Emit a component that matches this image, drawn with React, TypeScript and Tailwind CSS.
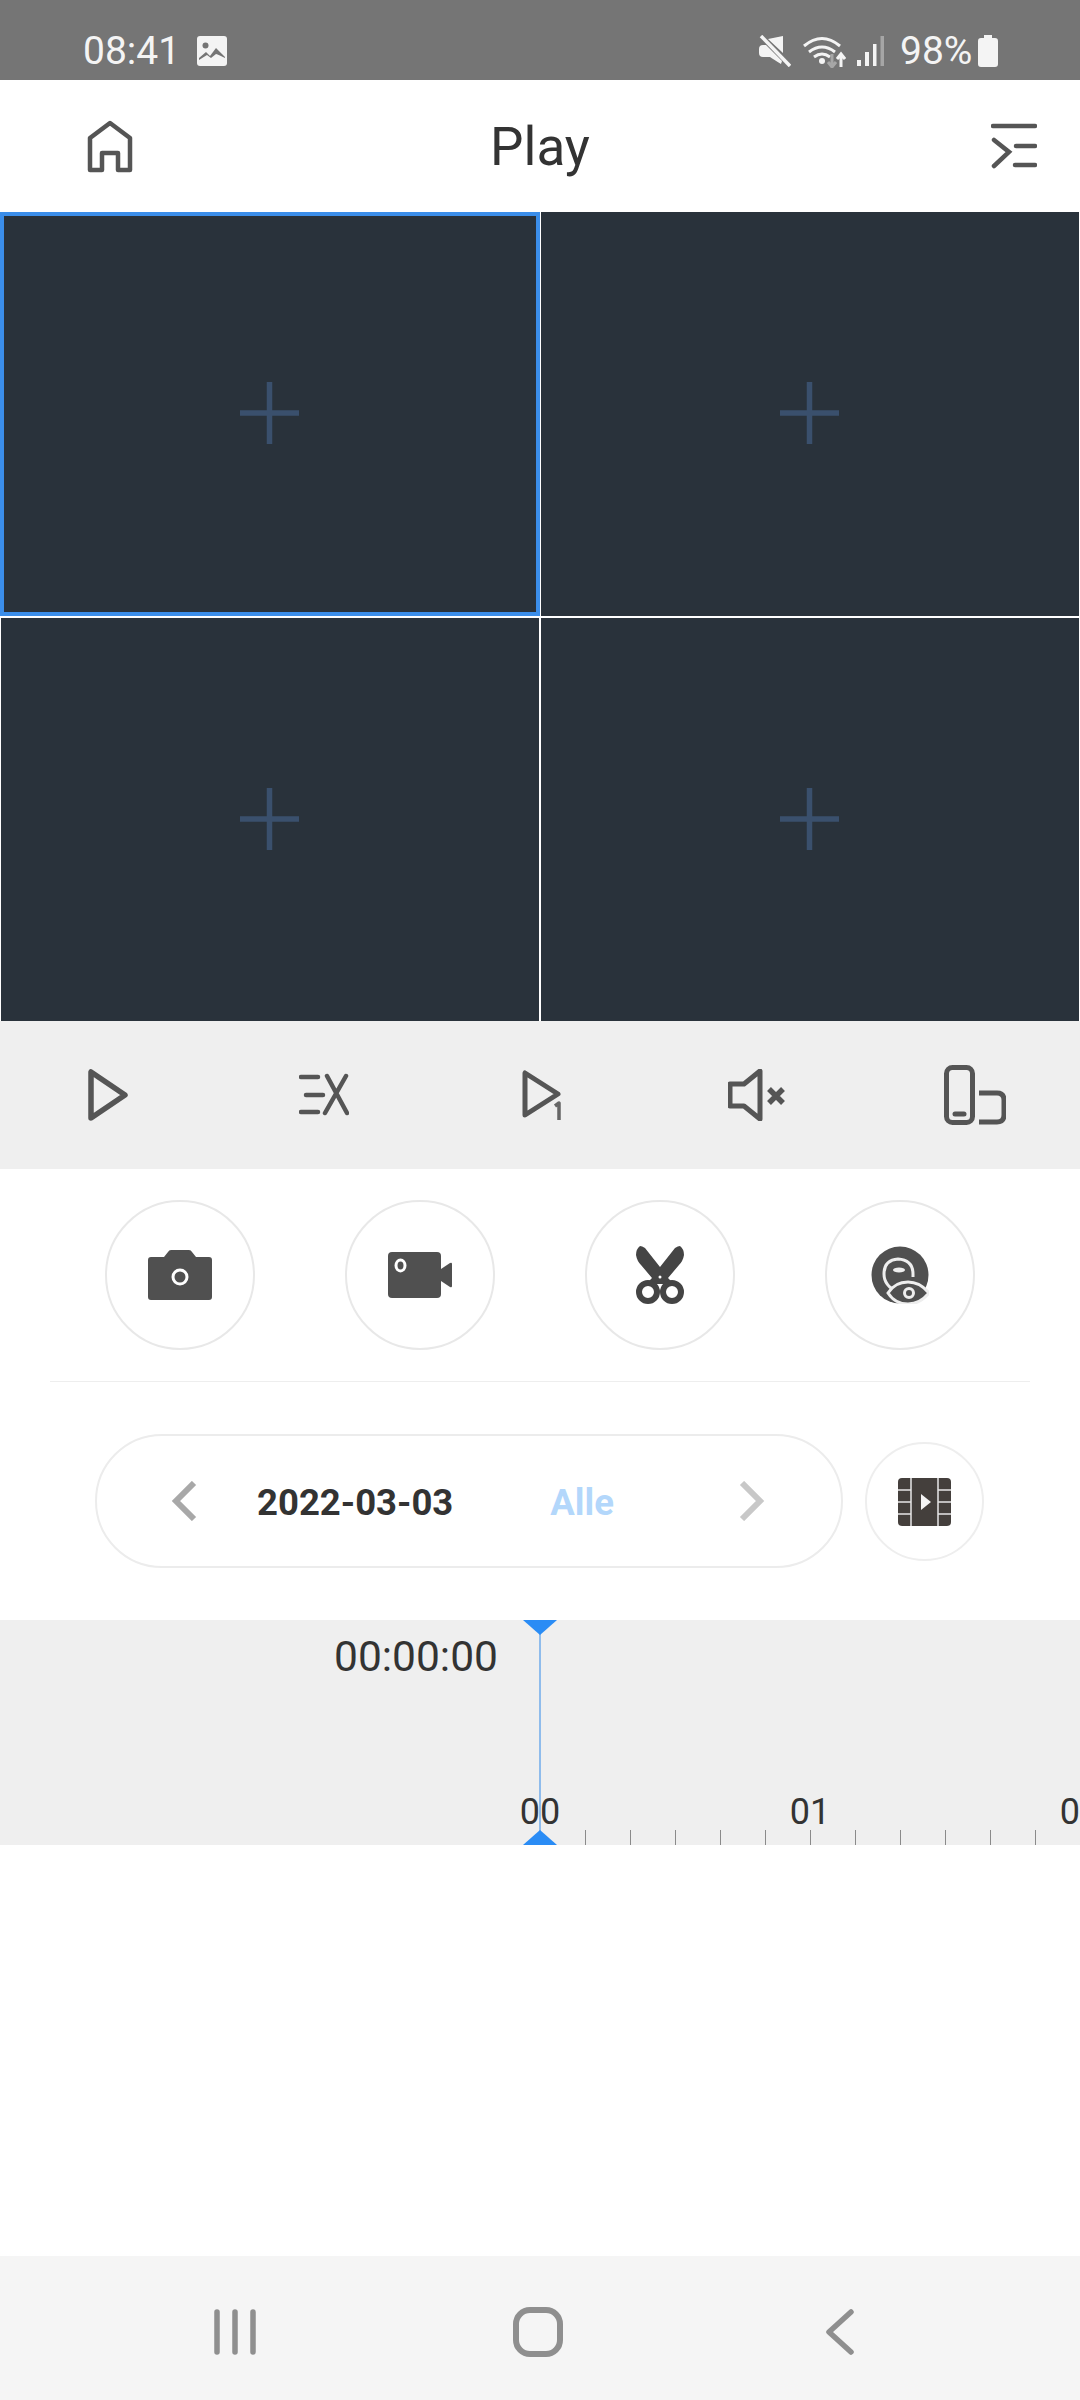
import React from 'react'

const cells = [0, 1, 2, 3]
const hours = ['00', '01', '02']
const ticks = [0, 1, 2, 3, 4, 5]

const Plus = () => (
  <svg width="60" height="62" viewBox="0 0 60 62" fill="none" stroke="#3a506d" strokeWidth="5.500">
    <path d="M0 31H59M29.500 0V62" />
  </svg>
)

const StatusBar = () => (
  <div className="h-20 bg-[#757575] pt-[22px] flex items-center text-[#f4f4f4] text-[39px] leading-none font-['Roboto',sans-serif]">
    <span className="ml-[83px] w-[114px]">08:41</span>
    <svg width="30" height="30" viewBox="0 0 30 30">
      <rect width="30" height="30" rx="3" fill="#f4f4f4" />
      <circle cx="8.500" cy="9.500" r="3" fill="#757575" />
      <path d="M2 22l7-6 4 4 6-8 9 9v1q-8-4-9-4l-5 4-4-3-8 5z" fill="#757575" />
    </svg>
    <div className="ml-auto mr-[82px] flex items-center">
      <svg width="32" height="32" viewBox="0 0 32 32" fill="#f4f4f4">
        <path d="M24 1v17L9 4zM0 14q0-4 4-4h3l16 16-1 3q-8-5-11-7H4q-4 0-4-4z" />
        <path d="M2 1l29 30" stroke="#f4f4f4" strokeWidth="3.500" />
      </svg>
      <svg className="ml-3" width="43" height="33" viewBox="0 0 43 33" fill="none" stroke="#f4f4f4" strokeWidth="3">
        <path d="M1 11q18-15 36 0M6 17q13-10 26 0M11 22q8-6 16 0" />
        <circle cx="19" cy="26" r="3" fill="#f4f4f4" stroke="none" />
        <path d="M29 19v13M25 27l4 5 4-5" stroke="#a6a6a6" />
        <path d="M38 32V19M34 24l4-5 4 5" />
      </svg>
      <svg className="ml-[11px]" width="27" height="30" viewBox="0 0 27 30" fill="#f4f4f4">
        <rect x="0" y="24" width="4" height="6" />
        <rect x="8" y="16" width="4" height="14" />
        <rect x="16" y="8" width="3.500" height="22" />
        <rect x="23.500" y="0" width="3.500" height="30" fill="#a6a6a6" />
      </svg>
      <span className="ml-4 w-[71px]">98%</span>
      <svg className="ml-[7px]" width="20" height="32" viewBox="0 0 20 32" fill="#f4f4f4">
        <path d="M6 0h8v3h3q3 0 3 3v23q0 3-3 3H3q-3 0-3-3V6q0-3 3-3h3z" />
      </svg>
    </div>
  </div>
)

const Header = () => (
  <div className="h-[132px] bg-white grid grid-cols-[1fr_auto_1fr] items-center">
    <svg className="ml-[87px]" width="46" height="53" viewBox="0 0 46 53" fill="none" stroke="#555" strokeWidth="4.500" strokeLinejoin="round">
      <path d="M3 50V18L23 3l20 15v32H31V33H15v17z" />
    </svg>
    <div className="text-[53px] leading-none pt-[3px] text-[#333] font-['Roboto',sans-serif]">Play</div>
    <svg className="justify-self-end mr-[43px]" width="46" height="46" viewBox="0 0 46 46" fill="none" stroke="#555" strokeWidth="4.500" strokeLinecap="round">
      <path d="M2 3h42M3 17l15 12L3 43M25 23h19M24 42h20" />
    </svg>
  </div>
)

const ControlBar = () => (
  <div className="h-[148px] bg-[#efefef] grid grid-cols-5 items-center justify-items-center">
    <svg width="40" height="52" viewBox="0 0 40 52" fill="none" stroke="#555" strokeWidth="5.500" strokeLinejoin="round">
      <path d="M3 3v46l34-23z" />
    </svg>
    <svg width="50" height="44" viewBox="0 0 50 44" fill="none" stroke="#555" strokeWidth="4.500" strokeLinecap="round">
      <path d="M2 4h17M7 22h17M2 39h17M26 40L47 3M28 3l20 37" />
    </svg>
    <svg className="ml-[4px]" width="40" height="50" viewBox="0 0 40 50" fill="none" stroke="#555" strokeWidth="5" strokeLinejoin="round">
      <path d="M3 3v42l33-21z" />
      <path d="M33 36l4-3v17" strokeWidth="3.500" stroke="#666" />
    </svg>
    <svg width="57" height="52" viewBox="0 0 57 52" fill="none" stroke="#555" strokeWidth="5" strokeLinejoin="round">
      <path d="M2 15h14L32 2v48L16 37H2z" />
      <path d="M41 20l14 14M55 20L41 34" strokeWidth="5.500" />
    </svg>
    <svg className="ml-[5px]" width="62" height="60" viewBox="0 0 62 60" fill="none" stroke="#555" strokeWidth="5">
      <rect x="2.500" y="2.500" width="26" height="55" rx="6" />
      <path d="M11 49h9" strokeWidth="5" strokeLinecap="round" />
      <path d="M35 28h18q7 0 7 7v15q0 7-7 7H35" />
    </svg>
  </div>
)

const Actions = () => (
  <div className="h-[213px] mx-[50px] border-b border-[#eeeeee] flex items-center gap-[90px] px-[55px] pb-[1px]">
    <div className="w-[150px] h-[150px] shrink-0 rounded-full border-2 border-[#e8e8e8] flex items-center justify-center">
      <svg width="64" height="50" viewBox="0 0 64 50" fill="#505050">
        <path d="M3 7h13l4-5q1-2 3-2h18q2 0 3 2l4 5h13q3 0 3 3v37q0 3-3 3H3q-3 0-3-3V10q0-3 3-3z" />
        <circle cx="32" cy="27" r="7" fill="none" stroke="#fff" strokeWidth="3" />
      </svg>
    </div>
    <div className="w-[150px] h-[150px] shrink-0 rounded-full border-2 border-[#e8e8e8] flex items-center justify-center">
      <svg width="64" height="46" viewBox="0 0 64 46" fill="#505050">
        <rect width="53" height="46" rx="4" />
        <path d="M53 17l9-6q2-1 2 1v22q0 2-2 1l-9-6z" />
        <ellipse cx="12.500" cy="13.500" rx="4.500" ry="5.500" fill="none" stroke="#fff" strokeWidth="3" />
      </svg>
    </div>
    <div className="w-[150px] h-[150px] shrink-0 rounded-full border-2 border-[#e8e8e8] flex items-center justify-center">
      <svg width="48" height="58" viewBox="0 0 48 58" fill="#444">
        <path d="M4 0Q0 3 0 9q1 6 5 10l11 13-6 6h28l-6-6 11-13q4-4 5-10 0-6-4-9-2 0-5 2L24 21 9 2Q6 0 4 0z" />
        <circle cx="12" cy="46" r="9" fill="none" stroke="#444" strokeWidth="6" />
        <circle cx="36" cy="46" r="9" fill="none" stroke="#444" strokeWidth="6" />
        <circle cx="24" cy="31" r="1.500" fill="#fff" />
      </svg>
    </div>
    <div className="w-[150px] h-[150px] shrink-0 rounded-full border-2 border-[#e8e8e8] flex items-center justify-center">
      <svg width="58" height="58" viewBox="0 0 58 58" fill="none">
        <circle cx="29" cy="29" r="28.500" fill="#505050" />
        <path d="M27 46Q13 40 13 28 13 14 27 13q15 1 15 15v3" stroke="#eee" strokeWidth="3" />
        <ellipse cx="28" cy="24" rx="6" ry="2.500" fill="#eee" />
        <path d="M17 47q7-11 20-11 12 0 21 11-9 11-21 11-13 0-20-11z" fill="#505050" stroke="#eee" strokeWidth="3" />
        <circle cx="38" cy="47" r="4.500" stroke="#eee" strokeWidth="3" />
      </svg>
    </div>
  </div>
)

const DateRow = () => (
  <div className="h-[238px] flex pt-[52px] pl-[95px]">
    <div className="w-[748px] h-[134px] rounded-full border-2 border-[#ececec] flex items-center font-['Roboto',sans-serif] text-[36.500px] leading-none font-bold">
      <svg className="ml-[74px]" width="26" height="40" viewBox="0 0 26 40" fill="none" stroke="#a8a8a8" strokeWidth="6">
        <path d="M23 2L5 20l18 18" />
      </svg>
      <span className="ml-[60px] pt-[5px] text-[#333]">2022-03-03</span>
      <span className="ml-[97px] pt-[5px] text-[#b3d7fb]">Alle</span>
      <svg className="ml-[125px]" width="26" height="40" viewBox="0 0 26 40" fill="none" stroke="#c8c8c8" strokeWidth="6">
        <path d="M3 2l18 18L3 38" />
      </svg>
    </div>
    <div className="ml-[22px] mt-[8px] w-[119px] h-[119px] rounded-full border-2 border-[#eeeeee] flex items-center justify-center">
      <svg width="53" height="48" viewBox="0 0 53 48">
        <rect width="53" height="48" rx="4" fill="#443f3c" />
        <path d="M13 0v48M40 0v48M0 12h13M0 24h13M0 36h13M40 12h13M40 24h13M40 36h13" stroke="#e6e6e6" strokeWidth="1.500" />
        <path d="M23 16l10 8-10 8z" fill="#f4f4f4" />
      </svg>
    </div>
  </div>
)

const Timeline = () => (
  <div className="h-[225px] bg-[#efefef] relative overflow-hidden flex flex-col justify-between font-['Roboto',sans-serif] text-[#333]">
    <div className="pl-[334px] pt-[13px] text-[42.500px] leading-[48px]">00:00:00</div>
    <div className="flex pl-[540px]">
      {hours.map((hour) => (
        <div key={hour} className="w-[270px] shrink-0 relative pt-[45px] flex">
          <span className="absolute left-0 top-[7px] -translate-x-1/2 text-[36px] leading-[40px]">{hour}</span>
          {ticks.map((tick) => (
            <div key={tick} className="w-[45px] h-[15px] border-l border-[#8a8a8a]" />
          ))}
        </div>
      ))}
    </div>
    <div className="absolute left-[539px] top-0 bottom-0 w-[2px] bg-[#8fbcec]" />
    <div className="absolute left-[523px] top-0 w-[34px] h-[15px] bg-[#2a8cf5] [clip-path:polygon(0_0,100%_0,50%_100%)]" />
    <div className="absolute left-[523px] bottom-0 w-[34px] h-[15px] bg-[#2a8cf5] [clip-path:polygon(50%_0,100%_100%,0_100%)]" />
  </div>
)

const NavBar = () => (
  <div className="h-[144px] bg-[#f5f5f5] flex items-center pt-[8px]">
    <svg className="ml-[213px]" width="44" height="46" viewBox="0 0 44 46" fill="none" stroke="#8f8f8f" strokeWidth="5.500" strokeLinecap="round">
      <path d="M4 3v40M22 3v40M40 3v40" />
    </svg>
    <svg className="ml-[256px]" width="50" height="50" viewBox="0 0 50 50" fill="none" stroke="#8f8f8f" strokeWidth="6">
      <rect x="3" y="3" width="44" height="44" rx="14" />
    </svg>
    <svg className="ml-[263px]" width="28" height="46" viewBox="0 0 28 46" fill="none" stroke="#8f8f8f" strokeWidth="5.500" strokeLinecap="round" strokeLinejoin="round">
      <path d="M25 3L3 23l22 20" />
    </svg>
  </div>
)

const App: React.FC = () => {
  return (
    <div className="w-[1080px] h-[2400px] bg-white flex flex-col overflow-hidden">
      <StatusBar />
      <Header />

      {/* video grid */}
      <div className="h-[809px] bg-white px-px grid grid-cols-2 grid-rows-[404px_403px] gap-[2px]">
        {cells.map((cell) => (
          <div
            key={cell}
            className={
              cell === 0
                ? 'bg-[#29323b] border-4 border-[#3b8eea] -mx-px pb-[2px] flex items-center justify-center'
                : 'bg-[#29323b] pb-[2px] flex items-center justify-center'
            }
          >
            <Plus />
          </div>
        ))}
      </div>

      <ControlBar />
      <Actions />
      <DateRow />
      <Timeline />
      <div className="flex-1" />
      <NavBar />
    </div>
  )
}

export default App
